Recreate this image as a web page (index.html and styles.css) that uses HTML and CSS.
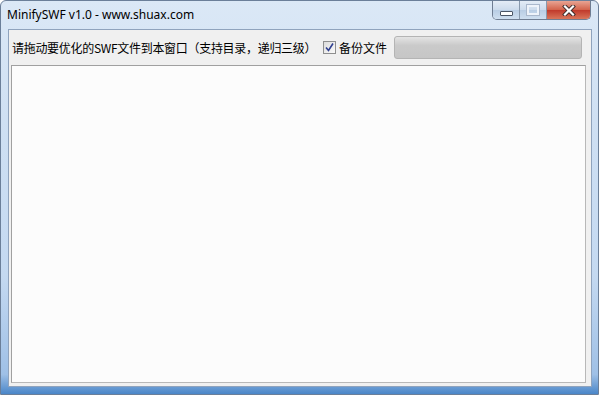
FILE: index.html
```html
<!DOCTYPE html>
<html>
<head>
<meta charset="utf-8">
<link rel="stylesheet" href="styles.css">
</head>
<body>
<div class="window">
  <div class="titlebar">
    <div class="title">MinifySWF v1.0 - www.shuax.com</div>
    <div class="controls">
      <div class="btn btn-min"><span class="min-glyph"></span></div>
      <div class="btn btn-max"><span class="max-glyph"></span></div>
      <div class="btn btn-close">
        <svg width="14" height="11" viewBox="0 0 14 11"><path d="M3 1.5 L11 9.5 M11 1.5 L3 9.5" stroke="#3a2a2a" stroke-width="4" stroke-linecap="square"/><path d="M3 1.5 L11 9.5 M11 1.5 L3 9.5" stroke="#ffffff" stroke-width="2.2" stroke-linecap="square"/></svg>
      </div>
    </div>
  </div>
  <div class="frame">
    <div class="client">
      <div class="toolbar">
        <div class="label">请拖动要优化的SWF文件到本窗口（支持目录，递归三级）</div>
        <div class="check">
          <span class="box"><svg width="11" height="11" viewBox="0 0 11 11"><path d="M2 5.5 L4.5 8.5 L9 1.5" fill="none" stroke="#2f3f8f" stroke-width="1.6"/></svg></span>
          <span class="check-label">备份文件</span>
        </div>
        <div class="progress"></div>
      </div>
      <div class="listbox"></div>
    </div>
  </div>
</div>
</body>
</html>
```
FILE: styles.css
```css
html, body { margin: 0; padding: 0; background: #fff; }
.window {
  width: 599px; height: 395px; box-sizing: border-box;
  border: 1px solid #6b7f99; border-radius: 6px 6px 0 0;
  background: linear-gradient(to bottom, #dbe8f6 0%, #cfe0f3 30%, #c4d9f1 70%, #9fc0e6 95%, #4a86c8 100%);
  display: flex; flex-direction: column;
  font-family: "Noto Sans", "Noto Sans CJK SC", sans-serif;
}
.titlebar { height: 27px; display: flex; justify-content: space-between; align-items: flex-start; }
.title { font-size: 12px; color: #000; padding: 6px 0 0 6px; line-height: 16px; }
.controls { display: flex; margin-right: 7px; border: 1px solid #6f7d92; border-top: 0; border-radius: 0 0 5px 5px; overflow: hidden; height: 19px; box-sizing: border-box; }
.btn { height: 18px; display: flex; align-items: center; justify-content: center; }
.btn-min, .btn-max { width: 26px; background: linear-gradient(to bottom, #e4ecf6, #ccdbec 50%, #b9cde4 51%, #cfdff0); border-right: 1px solid #8899ad; }
.btn-close { width: 43px; background: linear-gradient(to bottom, #e8a493, #d2624a 50%, #c0392b 51%, #d9755a); }
.min-glyph { width: 11px; height: 3px; background: #fff; border: 1px solid #4a5566; border-radius: 1px; margin-top: 7px; }
.max-glyph { width: 8px; height: 6px; border: 2px solid #eef3fa; outline: 1px solid #aab8cc; }
.frame { flex: 1; padding: 1px 6px 7px 7px; display: flex; }
.client { flex: 1; background: #f0f0f0; border: 1px solid #8fa3bd; display: flex; flex-direction: column; padding: 0 5px 3px 2px; }
.toolbar { height: 35px; display: flex; align-items: center; font-family: "Noto Sans CJK SC", sans-serif; font-size: 12px; color: #000; }
.label { padding-left: 1px; width: 311px; white-space: nowrap; letter-spacing: -0.3px; }
.check { display: flex; align-items: center; width: 71px; }
.box { width: 11px; height: 11px; border: 1px solid #8e8f8f; background: linear-gradient(135deg, #dcdcdc, #fafafa); display: inline-block; position: relative; margin-right: 3px; }
.box svg { position: absolute; left: 0; top: 0; }
.progress { width: 186px; height: 21px; border: 1px solid #b4b4b4; border-radius: 3px; background: linear-gradient(to bottom, #e4e4e4, #cacaca 40%, #c6c6c6); }
.listbox { flex: 1; background: #fcfcfc; border: 1px solid #a0a0a0; border-right-color: #b8b8b8; border-bottom-color: #b8b8b8; }
```
